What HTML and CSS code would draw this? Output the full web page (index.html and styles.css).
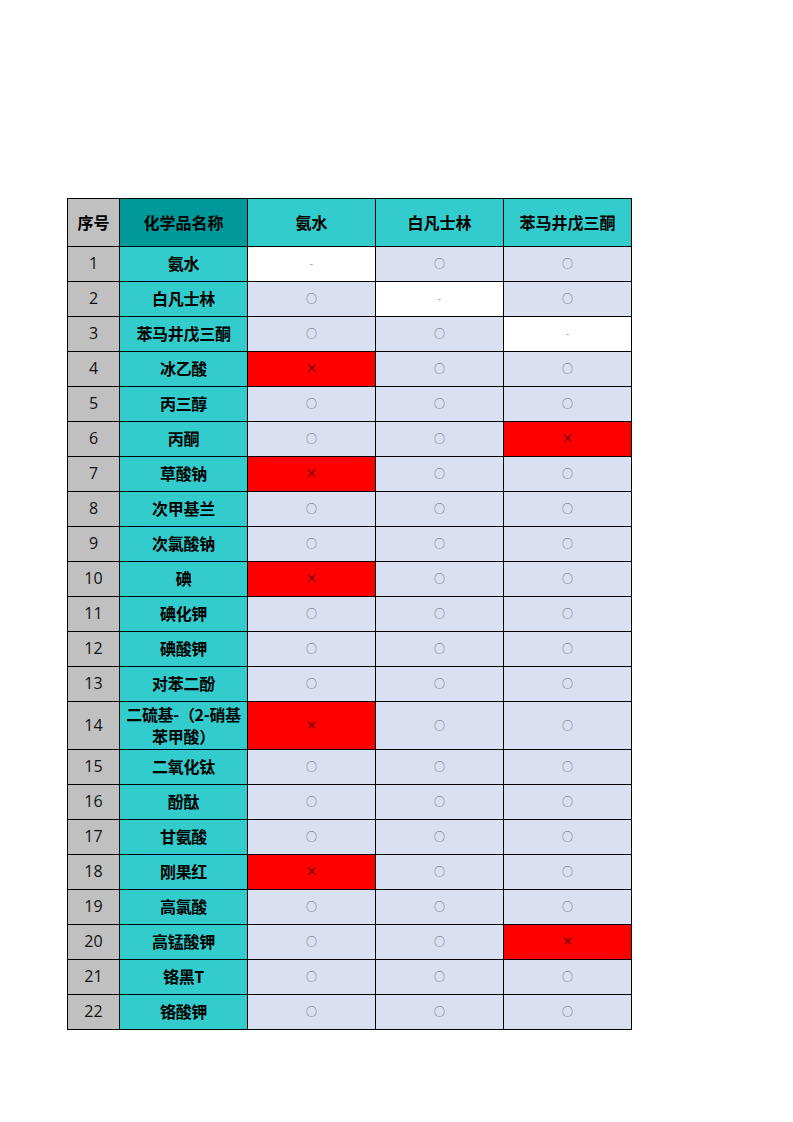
FILE: index.html
```html
<!DOCTYPE html>
<html lang="zh">
<head>
<meta charset="utf-8">
<link rel="stylesheet" href="styles.css">
</head>
<body>
<div class="sheet">
  <div class="c hd gray">序号</div><div class="c hd dark">化学品名称</div><div class="c hd teal">氨水</div><div class="c hd teal">白凡士林</div><div class="c hd teal">苯马井戊三酮</div>

  <div class="c num">1</div><div class="c name">氨水</div><div class="c w dash">-</div><div class="c l o">○</div><div class="c l o">○</div>
  <div class="c num">2</div><div class="c name">白凡士林</div><div class="c l o">○</div><div class="c w dash">-</div><div class="c l o">○</div>
  <div class="c num">3</div><div class="c name">苯马井戊三酮</div><div class="c l o">○</div><div class="c l o">○</div><div class="c w dash">-</div>
  <div class="c num">4</div><div class="c name">冰乙酸</div><div class="c r x">×</div><div class="c l o">○</div><div class="c l o">○</div>
  <div class="c num">5</div><div class="c name">丙三醇</div><div class="c l o">○</div><div class="c l o">○</div><div class="c l o">○</div>
  <div class="c num">6</div><div class="c name">丙酮</div><div class="c l o">○</div><div class="c l o">○</div><div class="c r x">×</div>
  <div class="c num">7</div><div class="c name">草酸钠</div><div class="c r x">×</div><div class="c l o">○</div><div class="c l o">○</div>
  <div class="c num">8</div><div class="c name">次甲基兰</div><div class="c l o">○</div><div class="c l o">○</div><div class="c l o">○</div>
  <div class="c num">9</div><div class="c name">次氯酸钠</div><div class="c l o">○</div><div class="c l o">○</div><div class="c l o">○</div>
  <div class="c num">10</div><div class="c name">碘</div><div class="c r x">×</div><div class="c l o">○</div><div class="c l o">○</div>
  <div class="c num">11</div><div class="c name">碘化钾</div><div class="c l o">○</div><div class="c l o">○</div><div class="c l o">○</div>
  <div class="c num">12</div><div class="c name">碘酸钾</div><div class="c l o">○</div><div class="c l o">○</div><div class="c l o">○</div>
  <div class="c num">13</div><div class="c name">对苯二酚</div><div class="c l o">○</div><div class="c l o">○</div><div class="c l o">○</div>
  <div class="c num tall">14</div><div class="c name tall">二硫基-（2-硝基<br>苯甲酸）</div><div class="c r x tall">×</div><div class="c l o tall">○</div><div class="c l o tall">○</div>
  <div class="c num">15</div><div class="c name">二氧化钛</div><div class="c l o">○</div><div class="c l o">○</div><div class="c l o">○</div>
  <div class="c num">16</div><div class="c name">酚酞</div><div class="c l o">○</div><div class="c l o">○</div><div class="c l o">○</div>
  <div class="c num">17</div><div class="c name">甘氨酸</div><div class="c l o">○</div><div class="c l o">○</div><div class="c l o">○</div>
  <div class="c num">18</div><div class="c name">刚果红</div><div class="c r x">×</div><div class="c l o">○</div><div class="c l o">○</div>
  <div class="c num">19</div><div class="c name">高氯酸</div><div class="c l o">○</div><div class="c l o">○</div><div class="c l o">○</div>
  <div class="c num">20</div><div class="c name">高锰酸钾</div><div class="c l o">○</div><div class="c l o">○</div><div class="c r x">×</div>
  <div class="c num">21</div><div class="c name">铬黑T</div><div class="c l o">○</div><div class="c l o">○</div><div class="c l o">○</div>
  <div class="c num">22</div><div class="c name">铬酸钾</div><div class="c l o">○</div><div class="c l o">○</div><div class="c l o">○</div>
</div>
</body>
</html>
```

FILE: styles.css
```css
html, body {
  margin: 0;
  padding: 0;
  background: #ffffff;
}

body {
  font-family: "Noto Sans CJK SC", "Noto Sans", sans-serif;
  color: #000;
}

.sheet {
  margin: 198px 0 0 67px;
  width: 565px;
  display: grid;
  grid-template-columns: 51px 127px 127px 127px 127px;
  grid-template-rows: 47px;
  grid-auto-rows: minmax(34px, auto);
  gap: 1px;
  padding: 1px;
  background: #000;
  box-sizing: border-box;
}

.c {
  display: flex;
  align-items: center;
  justify-content: center;
  text-align: center;
  font-size: 16px;
  line-height: 22px;
  padding-bottom: 2px;
  box-sizing: border-box;
}

.tall {
  min-height: 47px;
}

.hd {
  font-weight: 700;
}

.gray, .num {
  background: #c0c0c0;
}

.num {
  font-family: "Open Sans", "Noto Sans", sans-serif;
  font-size: 16px;
  color: #111;
}

.dark {
  background: #009999;
}

.teal, .name {
  background: #33cccc;
}

.name {
  font-weight: 700;
  letter-spacing: -0.3px;
}

.l {
  background: #d9e0f1;
}

.w {
  background: #ffffff;
}

.r {
  background: #ff0000;
}

.o {
  font-size: 11px;
  color: #666;
}

.dash {
  font-size: 11px;
  color: #999;
}

.x {
  font-size: 12px;
  color: #4a0000;
}
```
